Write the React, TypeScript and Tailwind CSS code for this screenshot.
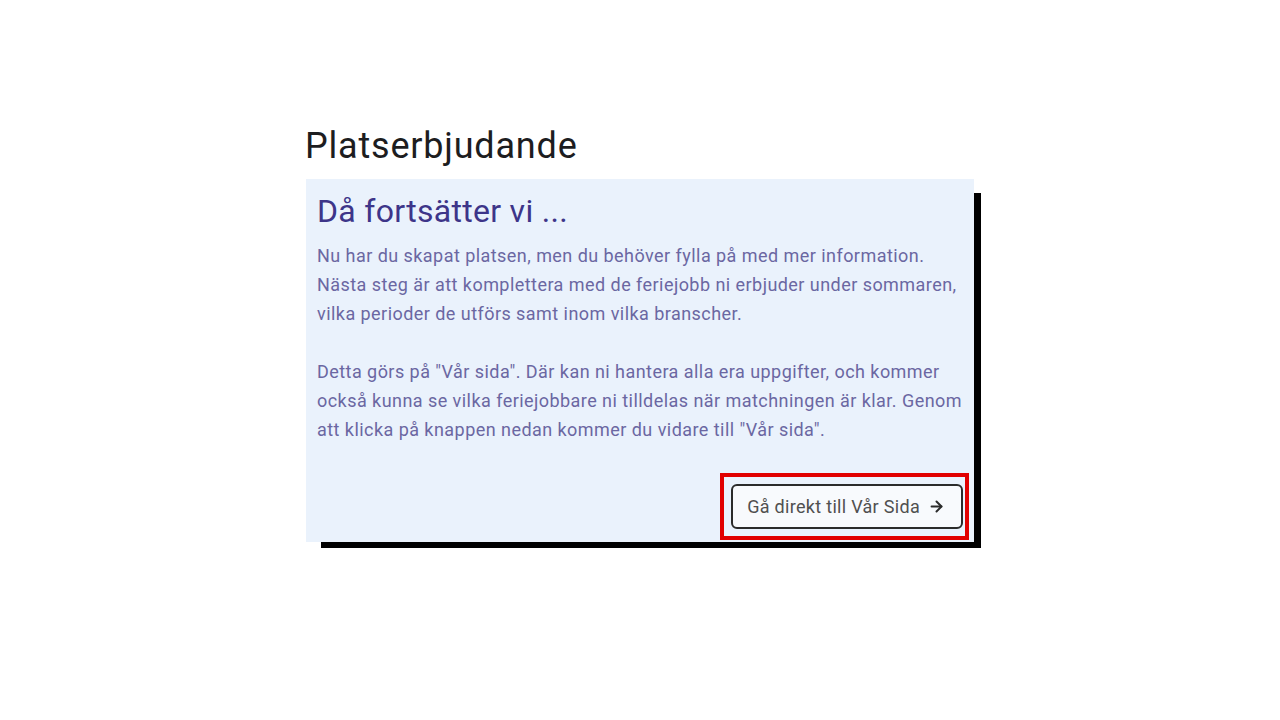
import { ArrowRight } from "lucide-react";

export default function App() {
  return (
    <main className="min-h-screen bg-white font-['Roboto',sans-serif] pt-[125px]">
      <div className="w-[668px] mx-auto">
        <h1 className="text-[36px] leading-[42px] tracking-[0.8px] text-[#1d1d1f] mb-[12px] -ml-px">Platserbjudande</h1>

        <div className="bg-[#eaf2fc] shadow-[11px_10px_0_-4px_#000] pt-[13px] pl-[11px] pr-[5px] pb-[2px]">
          <h2 className="text-[32px] leading-[38px] tracking-[0.3px] text-[#3d3589] mb-[11px]">Då fortsätter vi ...</h2>
          <p className="text-[18px] leading-[29px] tracking-[0.45px] text-[#6b67a2] whitespace-nowrap">
            Nu har du skapat platsen, men du behöver fylla på med mer information.
            <br />
            Nästa steg är att komplettera med de feriejobb ni erbjuder under sommaren,
            <br />
            vilka perioder de utförs samt inom vilka branscher.
            <br />
            <br />
            Detta görs på "Vår sida". Där kan ni hantera alla era uppgifter, och kommer
            <br />
            också kunna se vilka feriejobbare ni tilldelas när matchningen är klar. Genom
            <br />
            att klicka på knappen nedan kommer du vidare till "Vår sida".
          </p>

          <div className="flex justify-end mt-[29px]">
            <div className="border-4 border-[#e10000] pl-[7px] pr-[2px] py-[7px]">
              <button
                type="button"
                className="flex items-center gap-2 h-[45px] pl-[14px] pr-[16px] bg-[#f8fafd] border-2 border-[#2b2b2b] rounded-[6px] text-[18px] tracking-[0.3px] text-[#505050]"
              >
                Gå direkt till Vår Sida
                <ArrowRight size={17} strokeWidth={2.75} className="text-[#2b2b2b]" />
              </button>
            </div>
          </div>
        </div>
      </div>
    </main>
  );
}
